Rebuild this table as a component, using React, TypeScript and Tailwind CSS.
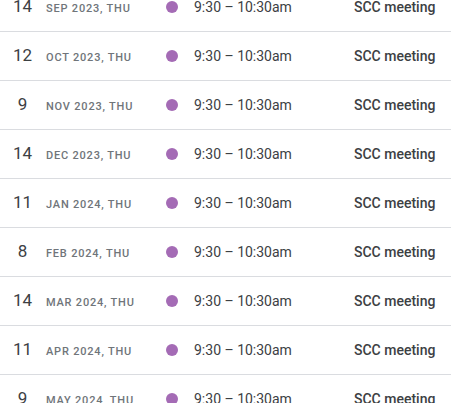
const events = [
  { day: "14", label: "Sep 2023, Thu" },
  { day: "12", label: "Oct 2023, Thu" },
  { day: "9", label: "Nov 2023, Thu" },
  { day: "14", label: "Dec 2023, Thu" },
  { day: "11", label: "Jan 2024, Thu" },
  { day: "8", label: "Feb 2024, Thu" },
  { day: "14", label: "Mar 2024, Thu" },
  { day: "11", label: "Apr 2024, Thu" },
  { day: "9", label: "May 2024, Thu" },
];

const App = () => {
  return (
    <div className="h-[403px] w-[451px] overflow-hidden bg-white font-['Roboto',sans-serif]">
      <div className="-mt-[17px]">
        {events.map((e, i) => (
          <div key={i} className="flex h-[49px] items-center border-b border-[#dadce0]">
            <div className="flex items-baseline">
              <div className="w-[45px] text-center text-[17px] text-[#3c4043]">{e.day}</div>
              <div className="w-[121px] pl-[1px] text-[11px] font-medium uppercase tracking-[0.8px] text-[#70757a]">
                {e.label}
              </div>
            </div>
            <div className="h-3 w-3 rounded-full bg-[#a46bb5]" />
            <div className="ml-4 w-[160px] text-sm text-[#3c4043]">9:30 – 10:30am</div>
            <div className="text-sm font-medium text-[#3c4043]">SCC meeting</div>
          </div>
        ))}
      </div>
    </div>
  );
};

export default App;
